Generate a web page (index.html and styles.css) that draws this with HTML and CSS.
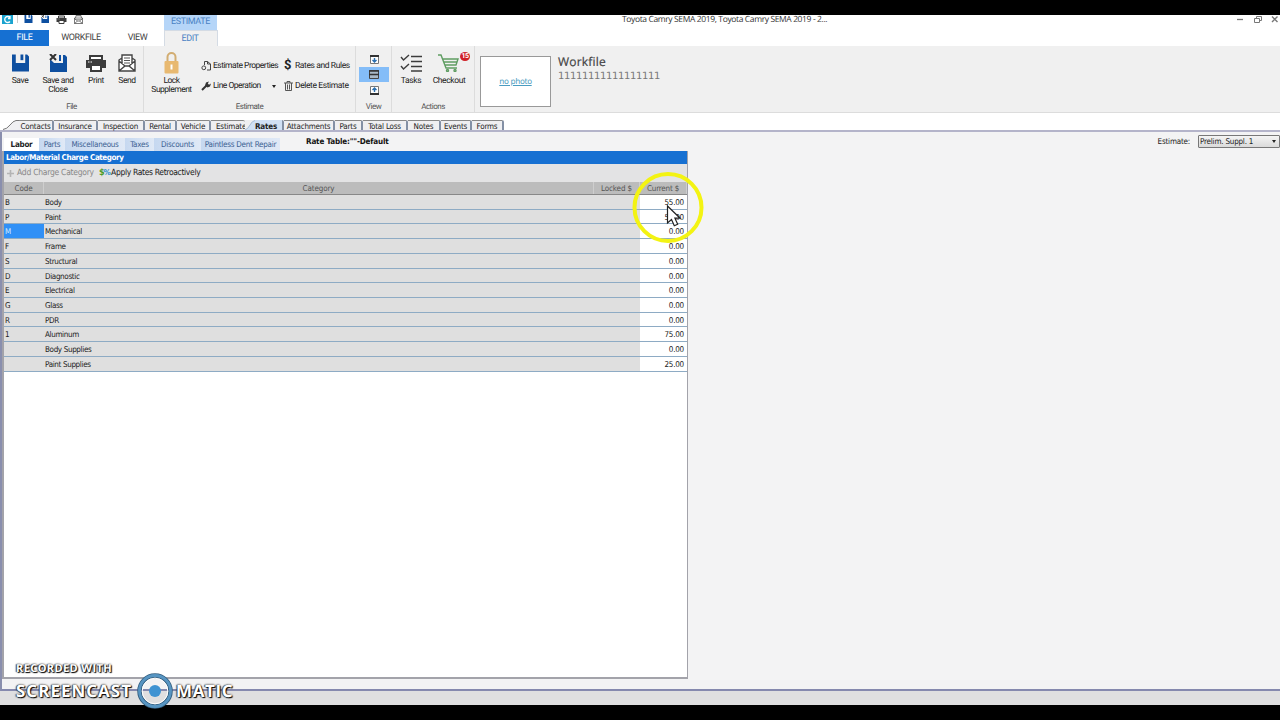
FILE: index.html
```
<!DOCTYPE html>
<html lang="en">
<head>
    <meta charset="UTF-8">
    <title>Workfile - Rates</title>
    <link rel="stylesheet" href="styles.css">
</head>
<body>
    <svg width="0" height="0" class="defs">
        <symbol id="disk" viewBox="0 0 18 18">
            <path d="M0 0h4v9h10V0h2l2 2v16H0z" fill="#0e4fa0"/>
            <path d="M9 0h3v6H9z" fill="#0e4fa0"/>
        </symbol>
        <symbol id="disk-close" viewBox="0 0 18 18">
            <path d="M1 5l4 4h9V1h2l2 2v15H1z" fill="#0e4fa0"/>
            <path d="M10 1h2v6h-2z" fill="#0e4fa0"/>
            <path d="M1 0l6 6M7 0L1 6" stroke="#333" stroke-width="2"/>
        </symbol>
        <symbol id="printer" viewBox="0 0 20 18">
            <path d="M4 2h12v4H4z" fill="#fff" stroke="#3c3c3c" stroke-width="2"/>
            <path d="M0 6h20v8H0z" fill="#3c3c3c"/>
            <path d="M5 11h10v6H5z" fill="#fff" stroke="#3c3c3c" stroke-width="2"/>
            <path d="M2 8h1.500M4.500 8h1.500" stroke="#fff"/>
        </symbol>
        <symbol id="mail" viewBox="0 0 18 18">
            <path d="M1 6l3-2V1h10v3l3 2v11H1zM1 7l6 5M17 7l-6 5M1 17l6-5h4l6 5M4 4v6M14 4v6" fill="#fff" stroke="#444" stroke-width="1.400"/>
            <path d="M6 4h6M6 6.500h6M6 9h6" stroke="#555"/>
        </symbol>
    </svg>

    <div class="app">
        <header class="titlebar">
            <div class="quick">
                <svg class="app-logo" viewBox="0 0 11 9"><rect width="11" height="9" fill="#1aa3cf"/><path d="M8 2.500A3 3 0 1 0 8 6.500M8 1v2.500H6" fill="none" stroke="#fff" stroke-width="1.300"/></svg>
                <i class="quick-sep"></i>
                <svg class="q1" width="9" height="8"><use href="#disk"/></svg>
                <svg class="q2" width="10" height="8"><use href="#disk-close"/></svg>
                <svg class="q3" width="11" height="9"><use href="#printer"/></svg>
                <svg class="q4" width="11" height="9"><use href="#mail"/></svg>
            </div>
            <div class="context-tab">ESTIMATE</div>
            <div class="title">Toyota Camry SEMA 2019, Toyota Camry SEMA 2019 - 2...</div>
            <svg class="win-buttons" width="44" height="10" viewBox="0 0 44 10" fill="none" stroke="#777">
                <path d="M2 4.500h6" stroke-width="1.300"/>
                <path d="M19.500 3.500h5v4h-5zM21.500 3V1.500h5v4H25"/>
                <path d="M37 1.500l5.500 5.500M42.500 1.500L37 7" stroke-width="1.400"/>
            </svg>
        </header>

        <nav class="ribbon-tabs">
            <span class="file">FILE</span>
            <span class="workfile">WORKFILE</span>
            <span class="view">VIEW</span>
            <span class="edit">EDIT</span>
        </nav>

        <section class="ribbon">
            <div class="group file-group">
                <div class="tools">
                    <div class="big w40"><svg width="17" height="17"><use href="#disk"/></svg><span>Save</span></div>
                    <div class="big w36"><svg width="18" height="17"><use href="#disk-close"/></svg><span>Save and<br>Close</span></div>
                    <div class="big w40"><svg width="20" height="17"><use href="#printer"/></svg><span>Print</span></div>
                    <div class="big w22"><svg width="18" height="17"><use href="#mail"/></svg><span>Send</span></div>
                </div>
                <div class="caption">File</div>
            </div>

            <div class="group estimate-group">
                <div class="tools">
                    <div class="big lock">
                        <svg width="15" height="22" viewBox="0 0 15 22">
                            <path d="M3.500 10V5a4 4 0 0 1 8 0v5" fill="none" stroke="#d2ad72" stroke-width="2"/>
                            <rect x="0.500" y="9" width="14" height="12.500" rx="1" fill="#e8b971"/>
                            <path d="M7.500 12.500v5" stroke="#fff" stroke-width="2"/>
                        </svg>
                        <span>Lock<br>Supplement</span>
                    </div>
                    <div class="small-col left">
                        <div class="small">
                            <svg width="10" height="10" viewBox="0 0 10 10" fill="none" stroke="#444"><path d="M3.500 4V.5h3l3 2.500v6H6M6.500.5V3h3"/><circle cx="2.800" cy="6.800" r="1.900"/></svg>
                            Estimate Properties
                        </div>
                        <div class="small">
                            <svg width="10" height="10" viewBox="0 0 10 10"><path d="M1 9l5-5" stroke="#333" stroke-width="2"/><path d="M5 1.500L8 .5 6.800 2.500 8 3.800 10 2.500 9 5.500 6.500 6.500 4 4.500z" fill="#333"/></svg>
                            Line Operation <i class="caret"></i>
                        </div>
                    </div>
                    <div class="small-col">
                        <div class="small"><b class="dollar">$</b>Rates and Rules</div>
                        <div class="small">
                            <svg width="9" height="10" viewBox="0 0 9 10" fill="none" stroke="#555"><path d="M0 2h9M3 2V.5h3V2M1.500 2v7.500h6V2M3.500 3.500v5M5.500 3.500v5"/></svg>
                            Delete Estimate
                        </div>
                    </div>
                </div>
                <div class="caption">Estimate</div>
            </div>

            <div class="group view-group">
                <div class="tools">
                    <div class="view-btn"><svg width="9" height="9" viewBox="0 0 9 9"><path d="M.5.5h8v8h-8z" fill="#fff" stroke="#777"/><path d="M0 1h9" stroke="#333" stroke-width="2"/><path d="M4.500 3v4M2.500 5l2 2 2-2" fill="none" stroke="#2a6fb0" stroke-width="1.400"/></svg></div>
                    <div class="view-btn on"><svg width="10" height="9" viewBox="0 0 10 9"><path d="M.5.5h9v8h-9z" fill="#a9b9c6" stroke="#444"/><path d="M0 1h10M0 4.500h10" stroke="#333" stroke-width="1.500"/></svg></div>
                    <div class="view-btn"><svg width="9" height="9" viewBox="0 0 9 9"><path d="M.5.5h8v8h-8z" fill="#fff" stroke="#777"/><path d="M0 8h9" stroke="#333" stroke-width="2"/><path d="M4.500 6V2M2.500 4l2-2 2 2" fill="none" stroke="#2a6fb0" stroke-width="1.400"/></svg></div>
                </div>
                <div class="caption">View</div>
            </div>

            <div class="group actions-group">
                <div class="tools">
                    <div class="big w38">
                        <svg width="22" height="18" viewBox="0 0 22 18" fill="none" stroke="#3c3c3c" stroke-width="1.400"><path d="M1 3l2.500 3L9 1M1 12l2.500 3L9 10M11 2.500h11M11 7.500h11M11 12.500h11M11 17h11"/></svg>
                        <span>Tasks</span>
                    </div>
                    <div class="big w38 cart">
                        <svg width="22" height="18" viewBox="0 0 22 18" fill="none" stroke="#5f9d62" stroke-width="1.400"><path d="M0 1h3l5 13h11M5 5h15l-2 6H7M6 8h13"/><circle cx="9.500" cy="16.500" r="1"/><circle cx="17" cy="16.500" r="1"/></svg>
                        <b class="badge">15</b>
                        <span>Checkout</span>
                    </div>
                </div>
                <div class="caption">Actions</div>
            </div>

            <div class="photo"><a>no photo</a></div>
            <div class="workfile-info">
                <div class="wf-name">Workfile</div>
                <div class="wf-id">11111111111111111</div>
            </div>
        </section>

        <nav class="page-tabs">
            <svg class="slant" width="16" height="10" viewBox="0 0 16 10"><path d="M0 9.500Q4 9 7 5T13 .5h3V10H0z" fill="#f0f0f2"/><path d="M0 9.500Q4 9 7 5T13 .5h3" fill="none" stroke="#777"/></svg>
            <span class="t-contacts">Contacts</span>
            <span class="t-insurance">Insurance</span>
            <span class="t-inspection">Inspection</span>
            <span class="t-rental">Rental</span>
            <span class="t-vehicle">Vehicle</span>
            <span class="t-estimate">Estimate</span>
            <span class="t-rates"><svg width="10" height="10" viewBox="0 0 10 10"><path d="M0 10Q3 9 5 5t5-4.500V10z" fill="#d0e0f4"/><path d="M0 10Q3 9 5 5t5-4.500" fill="none" stroke="#a9bdd6"/></svg>Rates</span>
            <span class="t-attachments">Attachments</span>
            <span class="t-parts">Parts</span>
            <span class="t-total">Total Loss</span>
            <span class="t-notes">Notes</span>
            <span class="t-events">Events</span>
            <span class="t-forms">Forms</span>
        </nav>

        <main class="workspace">
            <div class="sub-bar">
                <nav class="sub-tabs">
                    <span class="s-labor active">Labor</span>
                    <span class="s-parts">Parts</span>
                    <span class="s-misc">Miscellaneous</span>
                    <span class="s-taxes">Taxes</span>
                    <span class="s-disc">Discounts</span>
                    <span class="s-pdr">Paintless Dent Repair</span>
                </nav>
                <div class="rate-table">Rate Table:""-Default</div>
                <div class="estimate-pick">Estimate: <span class="select">Prelim. Suppl. 1<i class="caret"></i></span></div>
            </div>

            <div class="panel">
                <div class="panel-title">Labor/Material Charge Category</div>
                <div class="panel-tools">
                    <svg width="7" height="7" viewBox="0 0 7 7"><path d="M3.500 0v7M0 3.500h7" stroke="#b4b4b4" stroke-width="1.600"/></svg>
                    <span class="add">Add Charge Category</span>
                    <b class="rate-icon">$<em>%</em></b>
                    <span class="apply">Apply Rates Retroactively</span>
                </div>
                <div class="row head"><span>Code</span><span>Category</span><span>Locked $</span><span>Current $</span></div>
                <div class="row"><span>B</span><span>Body</span><span></span><span>55.00</span></div>
                <div class="row"><span>P</span><span>Paint</span><span></span><span>55.00</span></div>
                <div class="row"><span class="selected">M</span><span>Mechanical</span><span></span><span>0.00</span></div>
                <div class="row"><span>F</span><span>Frame</span><span></span><span>0.00</span></div>
                <div class="row"><span>S</span><span>Structural</span><span></span><span>0.00</span></div>
                <div class="row"><span>D</span><span>Diagnostic</span><span></span><span>0.00</span></div>
                <div class="row"><span>E</span><span>Electrical</span><span></span><span>0.00</span></div>
                <div class="row"><span>G</span><span>Glass</span><span></span><span>0.00</span></div>
                <div class="row"><span>R</span><span>PDR</span><span></span><span>0.00</span></div>
                <div class="row"><span>1</span><span>Aluminum</span><span></span><span>75.00</span></div>
                <div class="row"><span></span><span>Body Supplies</span><span></span><span>0.00</span></div>
                <div class="row"><span></span><span>Paint Supplies</span><span></span><span>25.00</span></div>
            </div>
        </main>
        <footer class="status"></footer>
    </div>

    <!-- pointer with highlight ring -->
    <svg class="pointer" width="74" height="74" viewBox="0 0 74 74">
        <circle cx="37" cy="36.500" r="33.500" fill="none" stroke="#f3f312" stroke-width="4"/>
        <path d="M36.500 35v17l4-3.500 2.800 6.200 3.400-1.500-2.800-6h5.200z" fill="#fff" stroke="#222" stroke-width="1.200"/>
    </svg>

    <!-- recorder watermark -->
    <div class="watermark">
        <div class="wm-small">RECORDED WITH</div>
        <div class="wm-big">
            <span class="wm-left">SCREENCAST</span>
            <svg width="36" height="36" viewBox="0 0 36 36"><circle cx="18" cy="18" r="15.500" fill="none" stroke="#345f80" stroke-width="4.500"/><circle cx="18" cy="18" r="15.500" fill="none" stroke="#5795c2" stroke-width="2.800"/><circle cx="18" cy="18" r="12.800" fill="none" stroke="#fff"/><circle cx="18" cy="18" r="6" fill="#3f93d2"/></svg>
            <span class="wm-right">MATIC</span>
        </div>
    </div>
</body>
</html>
```
FILE: styles.css
```
* {
    box-sizing: border-box;
    margin: 0;
    padding: 0;
}
body {
    width: 1280px;
    height: 720px;
    overflow: hidden;
    background: #000;
    padding: 15px 0;
    font-family: "DejaVu Sans Condensed", "DejaVu Sans", sans-serif;
    font-stretch: condensed;
    font-size: 8px;
    letter-spacing: -0.35px;
    text-rendering: geometricPrecision;
    color: #222;
}
.defs {
    position: absolute;
}
svg {
    flex: none;
}
.app {
    height: 690px;
    background: #fff;
    display: flex;
    flex-direction: column;
}

/* title bar */
.titlebar {
    height: 15px;
    display: flex;
    flex: none;
}
.quick {
    width: 164px;
    display: flex;
    align-items: flex-start;
}
.app-logo {
    width: 11px;
    height: 9px;
    margin-left: 2px;
}
.quick-sep {
    width: 1px;
    height: 8px;
    background: #ccc;
    margin-left: 4px;
}
.q1 { margin-left: 6px; }
.q2 { margin-left: 7px; }
.q3 { margin-left: 6px; }
.q4 { margin-left: 6px; }
.context-tab {
    width: 53px;
    background: #b5d5f8;
    color: #4a82c4;
    font: 9px/14px Roboto, sans-serif;
    letter-spacing: -0.4px;
    text-align: center;
}
.title {
    margin-left: 405px;
    width: 600px;
    font: 8.5px/9px "Open Sans", sans-serif;
    letter-spacing: -0.38px;
    color: #333;
}
.win-buttons {
    margin-left: 13px;
}

.ribbon-tabs {
    height: 16px;
    flex: none;
    display: flex;
    font: 9px/17px Roboto, sans-serif;
    letter-spacing: -0.4px;
    text-align: center;
    color: #444;
}
.file { width: 49px; background: #1670d2; color: #fff; }
.workfile { width: 64px; }
.view { width: 49px; }
.edit { width: 54px; margin-left: 2px; background: #f0f0f0; color: #4a82c4; border: 1px solid #d4dbe4; border-bottom: 0; line-height: 16px; padding-right: 2px; }

/* ribbon */
.ribbon {
    height: 67px;
    flex: none;
    display: flex;
    background: #f0f0f0;
    border-bottom: 1px solid #dcdcdc;
    font: 8.5px/9px Roboto, sans-serif;
    letter-spacing: -0.4px;
}
.group {
    display: flex;
    flex-direction: column;
    border-right: 1px solid #dcdcdc;
}
.tools {
    display: flex;
    height: 56px;
}
.caption {
    font-size: 8px;
    text-align: center;
    color: #555;
    letter-spacing: -0.5px;
}
.file-group { width: 144px; }
.estimate-group { width: 212px; }
.view-group { width: 36px; }
.actions-group { width: 83px; }
.big {
    display: flex;
    flex-direction: column;
    align-items: center;
    text-align: center;
    padding-top: 8px;
    white-space: nowrap;
}
.big svg { height: 18px; margin-bottom: 5px; }
.w40 { width: 40px; }
.w36 { width: 36px; }
.w22 { width: 22px; }
.w38 { width: 38px; }
.lock {
    width: 55px;
    padding-top: 6px;
    letter-spacing: -0.5px;
}
.lock svg { height: 22px; margin-bottom: 3px; }
.small-col {
    display: flex;
    flex-direction: column;
    gap: 10px;
    padding-top: 15px;
}
.small-col.left { width: 83px; margin-left: 2px; letter-spacing: -0.5px; }
.small {
    display: flex;
    align-items: center;
    gap: 2px;
    height: 10px;
    line-height: 10px;
    white-space: nowrap;
}
.dollar {
    font-size: 13px;
    width: 9px;
}
.caret {
    width: 0;
    border: 2px solid transparent;
    border-top: 3px solid #222;
    border-bottom: 0;
}
.small .caret { margin-left: 9px; }
.view-group .tools { flex-direction: column; padding-top: 5px; }
.view-btn {
    height: 16px;
    margin: 0 2px 0 3px;
    display: flex;
    align-items: center;
    justify-content: center;
}
.view-btn.on { background: #84bdf8; height: 15px; }
.cart { position: relative; }
.badge {
    position: absolute;
    top: 6px;
    left: 30px;
    width: 10px;
    height: 9px;
    border-radius: 50%;
    background: #cf2027;
    color: #fff;
    font-size: 7px;
}
.photo {
    width: 71px;
    height: 51px;
    margin: 10px 0 0 5px;
    border: 1px solid #999;
    background: #fff;
    display: flex;
    align-items: center;
    justify-content: center;
    font: 8px "DejaVu Sans", sans-serif;
    letter-spacing: -0.4px;
}
.photo a { color: #4a9cc0; text-decoration: underline; }
.workfile-info { padding: 8px 0 0 7px; }
.wf-name {
    font: 12px/15px "Open Sans", sans-serif;
    letter-spacing: 0.2px;
    color: #444;
    -webkit-text-stroke: 0.2px #444;
}
.wf-id {
    font: 10px/15px "DejaVu Sans", sans-serif;
    letter-spacing: -0.37px;
    color: #777;
}

/* page tabs */
.page-tabs {
    height: 19px;
    flex: none;
    display: flex;
    align-items: flex-end;
    padding-left: 3px;
    border-bottom: 2px solid #b4b4ca;
    background: #fff;
    letter-spacing: -0.2px;
}
.page-tabs > span {
    height: 10px;
    line-height: 12px;
    border-top: 1px solid #888;
    border-right: 2px solid #8390a5;
    background: #efeff1;
    text-align: center;
    white-space: nowrap;
    border-top-right-radius: 2px;
}
.page-tabs .t-contacts { width: 35px; }
.t-insurance { width: 44px; }
.t-inspection { width: 47px; }
.t-rental { width: 32px; }
.t-vehicle { width: 34px; }
.page-tabs .t-estimate { width: 34px; border-right: 0; padding-left: 5px; }
.page-tabs .t-rates {
    width: 39px;
    display: flex;
    border-top: 0;
    background: linear-gradient(90deg, #efeff1 10px, #d0e0f4 10px);
    font-weight: bold;
    line-height: 14px;
}
.t-attachments { width: 51px; }
.t-parts { width: 28px; }
.t-total { width: 45px; }
.t-notes { width: 33px; }
.t-events { width: 31px; }
.t-forms { width: 32px; }

/* workspace */
.workspace {
    flex: 1;
    background: #f3f3f4;
    border-left: 2px solid #8a8fae;
    border-bottom: 2px solid #8589ae;
}
.sub-bar {
    height: 19px;
    display: flex;
}
.sub-tabs {
    display: flex;
    padding: 6px 0 0 2px;
    width: 278px;
    color: #3b5f92;
    letter-spacing: -0.25px;
}
.sub-tabs span {
    height: 13px;
    line-height: 14px;
    text-align: center;
    white-space: nowrap;
    background: linear-gradient(90deg, #c6d8f0, #e0e9f6);
}
.sub-tabs .active { background: #fff; color: #222; font-weight: bold; }
.s-labor { width: 35px; }
.s-parts { width: 26px; }
.s-misc { width: 60px; }
.s-taxes { width: 29px; }
.s-disc { width: 47px; }
.s-pdr { width: 79px; }
.rate-table {
    font-weight: bold;
    color: #111;
    line-height: 20px;
    letter-spacing: -0.15px;
    padding-left: 26px;
    width: 860px;
}
.estimate-pick {
    display: flex;
    align-items: center;
    gap: 8px;
    padding-left: 18px;
    white-space: nowrap;
    letter-spacing: -0.2px;
}
.select {
    width: 82px;
    height: 13px;
    display: flex;
    align-items: center;
    justify-content: space-between;
    padding: 0 3px 0 1px;
    border: 1px solid #777;
    border-radius: 1px;
    background: linear-gradient(#f4f4f4, #dadada);
}

.panel {
    width: 686px;
    height: 528px;
    background: #fff;
    border: 1px solid #a3a3aa;
    border-width: 0 1px 2px 2px;
}
.panel-title {
    height: 13px;
    line-height: 14px;
    padding-left: 2px;
    background: #1670d2;
    color: #fff;
    font-weight: bold;
    letter-spacing: -0.42px;
}
.panel-tools {
    height: 18px;
    display: flex;
    align-items: center;
    padding-left: 3px;
    background: #e3e3e4;
}
.add { color: #888; width: 78px; margin-left: 3px; font-size: 8.5px; letter-spacing: -0.27px; white-space: nowrap; }
.rate-icon { font-size: 9px; color: #4b9a25; width: 12px; margin-left: 4px; letter-spacing: -1.2px; }
.rate-icon em { color: #2a8fd0; font-style: normal; font-size: 8px; }
.apply { font-size: 8.5px; letter-spacing: -0.35px; }

.row {
    display: grid;
    grid-template-columns: 40px 550px 46px 47px;
    grid-template-rows: 100%;
    height: 14.73px;
    line-height: 15px;
    background: #dfdfdf;
    border-bottom: 1px solid #8eabc4;
}
.row span { padding: 0 1px; }
.row span:last-child {
    background: #fff;
    text-align: right;
    padding-right: 3px;
    letter-spacing: -0.2px;
}
.row .selected { background: #3090f6; color: #cfe8ff; }
.row.head {
    height: 13px;
    line-height: 13px;
    letter-spacing: -0.1px;
    background: #bcbcbc;
    border-bottom: 1px solid #888;
    color: #555;
}
.row.head span {
    text-align: center;
    border-right: 1px solid #cecece;
    background: none;
    padding: 0;
}
.status {
    height: 14px;
    flex: none;
    background: #dfdfe0;
}

/* overlays */
.pointer {
    position: absolute;
    left: 631px;
    top: 171px;
}
.watermark {
    position: absolute;
    left: 16px;
    top: 663px;
    color: #fff;
    font-family: "Open Sans", sans-serif;
    font-stretch: normal;
    font-weight: bold;
    text-shadow: 1px 1px 1px #000, -1px 0 1px #444, 0 0 2px #222;
}
.wm-small {
    font-size: 11px;
    line-height: 12px;
    letter-spacing: 0.4px;
}
.wm-big {
    display: flex;
    align-items: center;
    font-size: 17px;
    line-height: 34px;
    letter-spacing: 1px;
    margin-top: -2px;
}
.wm-left { width: 121px; }
.wm-right { padding-left: 3px; letter-spacing: 0.6px; }
```
